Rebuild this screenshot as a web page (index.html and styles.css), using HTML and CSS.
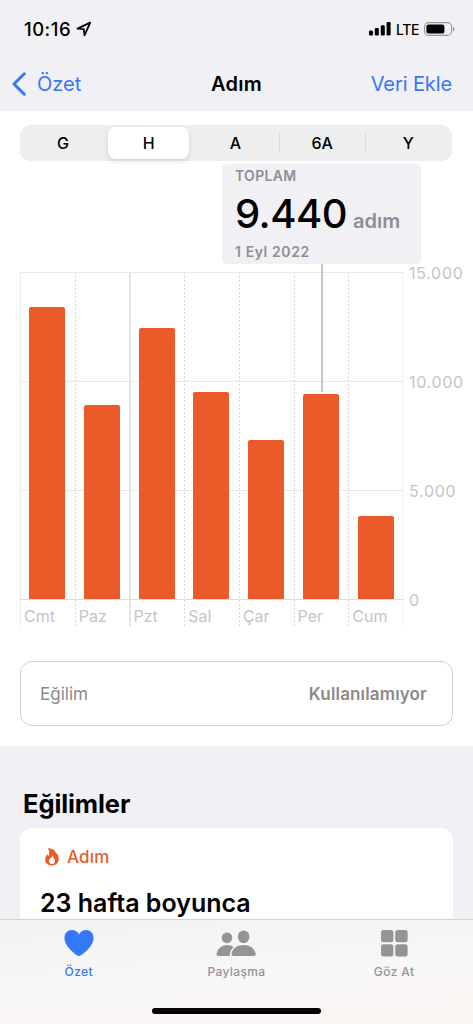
FILE: index.html
```
<!DOCTYPE html>
<html lang="tr">
<head>
  <meta charset="UTF-8">
  <meta name="viewport" content="width=device-width, initial-scale=1">
  <title>Adım</title>
  <link rel="stylesheet" href="styles.css">
</head>
<body>
  <div class="screen">
    <header class="header">
      <div class="status-bar">
        <div class="status-time">
          <span>10:16</span>
          <svg class="location-icon" viewBox="0 0 16 16">
            <path d="M1.4 7.6 14.2 1.6 8.5 14.3 7.8 8.2Z" fill="none" stroke="#000" stroke-width="1.8" stroke-linejoin="round"/>
          </svg>
        </div>
        <div class="status-icons">
          <svg class="signal-icon" viewBox="0 0 22 14">
            <rect x="0" y="8.5" width="4" height="5" rx="1.2"/>
            <rect x="5.8" y="6" width="4" height="7.5" rx="1.2"/>
            <rect x="11.8" y="3.2" width="4" height="10.3" rx="1.2"/>
            <rect x="17.6" y="0" width="4" height="13.5" rx="1.2"/>
          </svg>
          <span class="network">LTE</span>
          <svg class="battery-icon" viewBox="0 0 31 14">
            <rect x="0.6" y="0.6" width="27" height="12.8" rx="4" fill="none" stroke="#98989c" stroke-width="1.1"/>
            <rect x="2.4" y="2.4" width="18" height="9.2" rx="2.2"/>
            <path d="M29 4.8c1.9.7 1.9 3.8 0 4.5Z" fill="#98989c"/>
          </svg>
        </div>
      </div>
      <nav class="nav-bar">
        <a class="nav-back">
          <svg class="chevron" viewBox="0 0 14 24">
            <path d="M12.3 1.8 2 12 12.3 22.2" fill="none" stroke="#3478f6" stroke-width="3" stroke-linecap="round" stroke-linejoin="round"/>
          </svg>
          <span>Özet</span>
        </a>
        <h1 class="nav-title">Adım</h1>
        <a class="nav-action">Veri Ekle</a>
      </nav>
    </header>

    <main class="content">
      <section class="panel">
        <div class="segmented">
          <span class="segment">G</span>
          <span class="segment active">H</span>
          <span class="segment">A</span>
          <span class="segment divided">6A</span>
          <span class="segment divided">Y</span>
        </div>

        <div class="chart">
          <div class="plot">
            <div class="gridlines">
              <span></span>
              <span></span>
              <span></span>
            </div>
            <div class="day first"><div class="bar-area"><div class="bar" style="height: 292px"></div></div><span>Cmt</span></div>
            <div class="day"><div class="bar-area"><div class="bar" style="height: 194px"></div></div><span>Paz</span></div>
            <div class="day week"><div class="bar-area"><div class="bar" style="height: 271px"></div></div><span>Pzt</span></div>
            <div class="day"><div class="bar-area"><div class="bar" style="height: 207px"></div></div><span>Sal</span></div>
            <div class="day"><div class="bar-area"><div class="bar" style="height: 159px"></div></div><span>Çar</span></div>
            <div class="day"><div class="bar-area"><div class="bar" style="height: 205px"></div></div><span>Per</span></div>
            <div class="day"><div class="bar-area"><div class="bar" style="height: 83px"></div></div><span>Cum</span></div>
          </div>
          <div class="axis">
            <span>15.000</span>
            <span>10.000</span>
            <span>5.000</span>
            <span>0</span>
          </div>
          <div class="marker"></div>
          <div class="tooltip">
            <div class="tooltip-label">TOPLAM</div>
            <div class="tooltip-value">
              <span class="number">9.440</span>
              <span class="unit">adım</span>
            </div>
            <div class="tooltip-date">1 Eyl 2022</div>
          </div>
        </div>

        <div class="trend-row">
          <span>Eğilim</span>
          <strong>Kullanılamıyor</strong>
        </div>
      </section>

      <section class="trends">
        <h2>Eğilimler</h2>
        <article class="card">
          <div class="card-head">
            <svg class="flame" viewBox="0 0 14 18">
              <path fill="#eb5a28" fill-rule="evenodd" d="M2.7.2C7.800 .2 10.800 2.500 11.200 6.200 11.500 5.700 11.500 5.200 11.400 4.700 13.100 6.400 13.700 8.600 13.700 10.800 13.700 15 11 17.500 7 17.500 3 17.500 .2 15 .2 11.500 .2 9 1.400 7.400 2.600 6.300 2.800 7.200 3.100 7.700 3.600 8.100 4.600 5.600 4.600 2.400 2.700.2ZM7.500 7.600C7.600 9.600 4 10.300 4 13 4 14.900 5.300 15.900 7 15.900 8.900 15.900 10.100 14.700 10.100 12.900 10.100 11.900 9.800 11.200 9.300 10.600 9.200 11.200 8.900 11.600 8.500 11.900 8.800 10.200 8.500 8.600 7.500 7.600Z"/>
            </svg>
            <span>Adım</span>
          </div>
          <p class="card-text">23 hafta boyunca</p>
        </article>
      </section>
    </main>

    <footer class="tab-bar">
      <div class="tabs">
        <a class="tab active">
          <svg width="30" height="28" viewBox="0 0 30 28">
            <path d="M15 27.200C13.800 27.200 .5 18.500 .5 9 .5 4.200 3.700 1 7.900 1 11.100 1 13.700 2.700 15 5.500 16.300 2.700 18.900 1 22.100 1 26.300 1 29.500 4.200 29.500 9 29.500 18.500 16.200 27.200 15 27.200Z" fill="currentColor"/>
          </svg>
          <span>Özet</span>
        </a>
        <a class="tab">
          <svg width="40" height="28" viewBox="0 0 40 28">
            <g fill="currentColor">
              <circle cx="11" cy="8.700" r="5.300"/>
              <path d="M2.300 27C.9 27 .3 26.100 .6 24.600 1.700 19.500 6 16 11 16 13.600 16 15.900 16.800 17.600 18.200 15.300 20.200 14 22.900 13.700 25.700 13.600 26.200 13.600 26.600 13.700 27Z"/>
              <ellipse cx="27.600" cy="7.700" rx="5.800" ry="6.300"/>
              <path d="M17.600 27C16 27 15.300 26.200 15.600 24.600 16.500 19.400 21.500 16 27.600 16 33.700 16 38.700 19.400 39.600 24.600 39.900 26.200 39.200 27 37.600 27Z"/>
            </g>
          </svg>
          <span>Paylaşma</span>
        </a>
        <a class="tab">
          <svg width="28" height="28" viewBox="0 0 28 28">
            <g fill="currentColor">
              <rect x="1" y="1" width="12.400" height="12.300" rx="2.500"/>
              <rect x="15.200" y="1" width="12.400" height="12.300" rx="2.500"/>
              <rect x="1" y="15.200" width="12.400" height="12.300" rx="2.500"/>
              <rect x="15.200" y="15.200" width="12.400" height="12.300" rx="2.500"/>
            </g>
          </svg>
          <span>Göz At</span>
        </a>
      </div>
      <div class="home-indicator"></div>
    </footer>
  </div>
</body>
</html>
```
FILE: styles.css
```
* {
    box-sizing: border-box;
}

body {
    margin: 0;
    font-family: Inter, "Liberation Sans", sans-serif;
    background: #f1f0f5;
    color: #000;
}

.screen {
    display: flex;
    flex-direction: column;
    width: 473px;
    height: 1024px;
    overflow: hidden;
}

/* Header */
.header {
    flex: none;
    height: 111px;
    background: #f1f0f5;
}

.status-bar {
    display: flex;
    justify-content: space-between;
    align-items: center;
    height: 56px;
    padding: 2px 18px 0 24px;
}

.status-time {
    display: flex;
    align-items: center;
    gap: 5px;
    font-size: 18.5px;
    font-weight: 550;
    letter-spacing: 0.5px;
}

.location-icon {
    width: 16px;
    height: 16px;
}

.status-icons {
    display: flex;
    align-items: center;
    gap: 5px;
}

.signal-icon {
    width: 22px;
    height: 14px;
}

.network {
    font-size: 14px;
    font-weight: 500;
    letter-spacing: -0.4px;
}

.battery-icon {
    width: 31px;
    height: 14px;
}

.nav-bar {
    display: grid;
    grid-template-columns: 1fr auto 1fr;
    align-items: center;
    height: 55px;
    padding: 0 20px 0 12px;
    font-size: 20px;
    color: #3478f6;
}

.nav-back {
    display: flex;
    align-items: center;
    gap: 11px;
}

.chevron {
    width: 14px;
    height: 24px;
}

.nav-title {
    margin: 0 -8px 0 0;
    font-size: 20px;
    font-weight: 600;
    letter-spacing: 0.2px;
    color: #000;
}

.nav-action {
    padding-right: 1px;
    text-align: right;
    letter-spacing: -0.1px;
}

/* Chart panel */
.content {
    flex: 1;
    min-height: 0;
    overflow: hidden;
}

.panel {
    height: 635px;
    padding: 14px 20px 0;
    background: #fff;
}

.segmented {
    display: grid;
    grid-template-columns: repeat(5, 1fr);
    align-items: center;
    width: 432px;
    height: 36px;
    padding-right: 1px;
    border-radius: 10px;
    background: #eee;
}

.segment {
    font-size: 16px;
    font-weight: 450;
    line-height: 20px;
    text-align: center;
}

.segment.active {
    margin: 0 3px 0 2px;
    font-weight: 550;
    line-height: 32px;
    border-radius: 8px;
    background: #fff;
    box-shadow: 0 2px 5px rgba(0, 0, 0, 0.12);
}

.segment.divided {
    border-left: 1px solid #d9d9dc;
}

.chart {
    position: relative;
    display: flex;
    height: 354px;
    margin-top: 111px;
}

.plot {
    flex: none;
    position: relative;
    display: grid;
    grid-template-columns: repeat(7, 1fr);
    width: 384px;
    border-right: 1px solid #f3f3f3;
}

.gridlines {
    position: absolute;
    top: 0;
    left: 0;
    right: 0;
    height: 328px;
    border-top: 1px solid #e8e8ea;
    border-bottom: 1px solid #dcdcdc;
    display: flex;
    flex-direction: column;
}

.gridlines span {
    flex: 1;
}

.gridlines span + span {
    border-top: 1px solid #e8e8ea;
}

.day {
    background: repeating-linear-gradient(#d8d8dc 0 2px, transparent 2px 4px) left / 1px 100% no-repeat;
    color: #c4c4c6;
    font-size: 16px;
}

.day.first {
    background: linear-gradient(#ececec, #ececec) left / 1px 100% no-repeat;
}

.day.week {
    background: linear-gradient(#e4e4e6, #e4e4e6) left / 2px 100% no-repeat;
}

.bar-area {
    display: flex;
    align-items: flex-end;
    justify-content: center;
    height: 327px;
}

.bar {
    position: relative;
    width: 36px;
    border-radius: 2px 2px 0 0;
    background: #eb5a28;
}

.day span {
    display: block;
    padding-left: 4px;
    line-height: 20px;
    margin-top: 7px;
}

.axis {
    display: flex;
    flex-direction: column;
    justify-content: space-between;
    height: 347px;
    margin-top: -9px;
    padding-left: 5px;
    line-height: 20px;
    font-size: 16px;
    letter-spacing: 0.7px;
    color: #c4c4c6;
}

.marker {
    position: absolute;
    left: 301px;
    top: -8px;
    width: 2px;
    height: 128px;
    background: #c8c8ca;
}

.tooltip {
    position: absolute;
    left: 202px;
    top: -108px;
    width: 199px;
    height: 100px;
    padding: 3px 13px;
    border-radius: 5px;
    background: #f1f0f5;
    color: #8e8e93;
}

.tooltip-label,
.tooltip-date {
    font-size: 14px;
    font-weight: 600;
    line-height: 18px;
    letter-spacing: 0.3px;
}

.tooltip-date {
    letter-spacing: 0.6px;
}

.tooltip-value {
    display: flex;
    align-items: baseline;
    gap: 6px;
    height: 58px;
    line-height: 58px;
    color: #000;
}

.number {
    font-size: 40px;
    font-weight: 500;
    letter-spacing: -0.5px;
}

.unit {
    font-size: 20px;
    font-weight: 600;
    line-height: 24px;
    color: #8e8e93;
}

.trend-row {
    display: flex;
    justify-content: space-between;
    align-items: center;
    height: 65px;
    margin-top: 35px;
    padding: 0 25px 0 19px;
    border: 1px solid #cfcfd1;
    border-radius: 12px;
    font-size: 17px;
    color: #8a8a8c;
}

.trend-row strong {
    font-weight: 600;
    letter-spacing: 0.15px;
}

/* Trends */
.trends {
    padding: 42px 20px 0;
}

.trends h2 {
    margin: 0 0 8px 3px;
    font-size: 25.5px;
    font-weight: 680;
    line-height: 32px;
    letter-spacing: -0.1px;
}

.card {
    height: 120px;
    padding: 18px 20px;
    border-radius: 12px;
    background: #fff;
}

.card-head {
    display: flex;
    align-items: center;
    gap: 8px;
    height: 22px;
    padding-left: 5px;
    font-size: 17px;
    font-weight: 550;
    letter-spacing: 0.2px;
    color: #eb5a28;
}

.flame {
    width: 14px;
    height: 18px;
}

.card-text {
    margin: 19px 0 0;
    font-size: 25px;
    font-weight: 600;
    line-height: 32px;
}

/* Tab bar */
.tab-bar {
    flex: none;
    height: 105px;
    border-top: 1px solid #d4d4d6;
    background: linear-gradient(175deg, #f2f2f3, #f8f7f7 50%, #fbf6f4);
}

.tabs {
    display: grid;
    grid-template-columns: repeat(3, 1fr);
    height: 91px;
    padding-top: 9px;
}

.tab {
    display: flex;
    flex-direction: column;
    align-items: center;
    gap: 7px;
    font-size: 12px;
    font-weight: 500;
    line-height: 16px;
    letter-spacing: 0.4px;
    color: #949494;
}

.tab.active {
    color: #3478f6;
}

.home-indicator {
    width: 169px;
    height: 6px;
    margin: -3px auto 0;
    border-radius: 3px;
    background: #000;
}
```
